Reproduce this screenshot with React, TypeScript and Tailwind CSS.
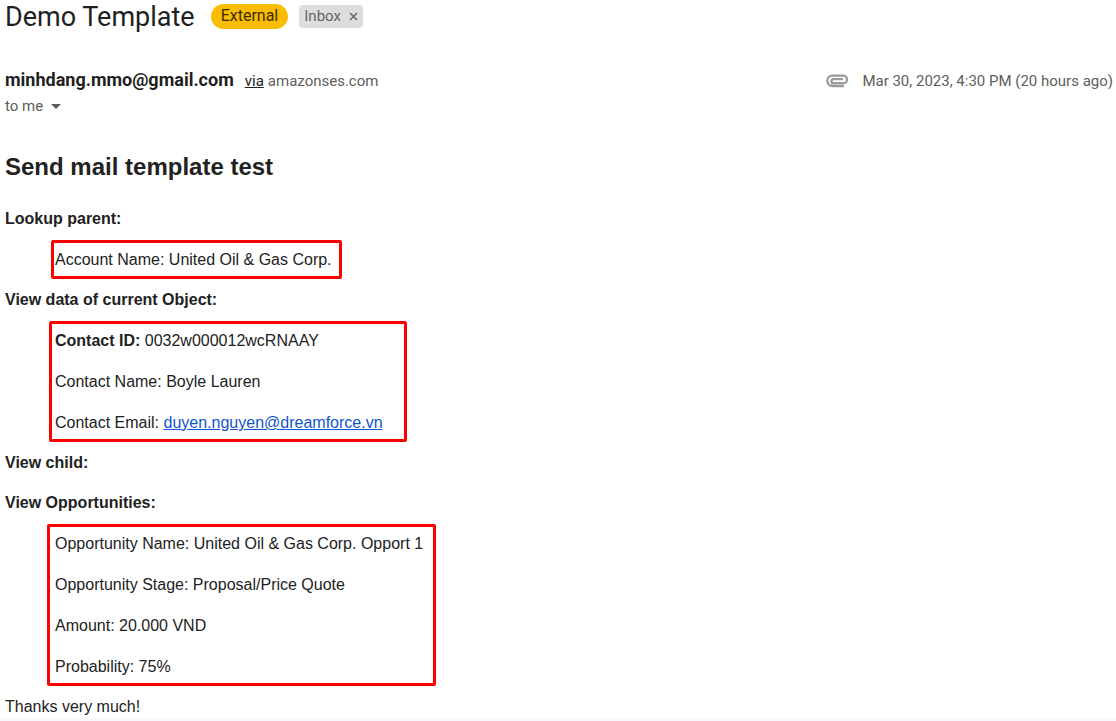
import type { ReactNode } from "react";
import { MdArrowDropDown } from "react-icons/md";

const contactEmail = "duyen.nguyen@dreamforce.vn";

const opportunityRows = [
    { label: "Opportunity Name", value: "United Oil & Gas Corp. Opport 1" },
    { label: "Opportunity Stage", value: "Proposal/Price Quote" },
    { label: "Amount", value: "20.000 VND" },
    { label: "Probability", value: "75%" },
];

const Highlight = ({ className, children }: { className: string; children: ReactNode }) => (
    <div className={`flex max-w-full flex-col gap-[19px] rounded-xs border-3 border-[#fe0000] pt-1.5 pb-[5px] ${className}`}>
        {children}
    </div>
);

const PaperclipIcon = () => (
    <svg viewBox="0 0 22 14" className="h-[14px] w-[22px]" fill="none" stroke="#999999" strokeWidth="2.3">
        <path d="M18 12H6.500a5.200 5.200 0 0 1 0-10.400h10.700a3.800 3.800 0 0 1 0 7.600H7.500a2 2 0 0 1 0-4H17" />
    </svg>
);

const MailHeader = () => (
    <header className="font-['Roboto','Liberation_Sans',sans-serif] text-[#5e5e5e]">
        <div className="flex h-8 items-center">
            <h1 className="pt-0.5 text-[27px] leading-8 text-[#1f1f1f]">Demo Template</h1>
            <span className="ml-4 flex h-[25px] items-center rounded-full bg-[#fbbc04] px-2.5 text-[16px] text-[#3c2d00]">
                External
            </span>
            <span className="ml-[11px] flex h-[23px] items-center gap-2 rounded bg-[#dddddd] px-[5px] text-[15px] text-[#666666]">
                Inbox
                <button type="button" aria-label="Remove label Inbox" className="cursor-pointer">
                    <svg viewBox="0 0 9 9" className="size-[9px]" fill="none" stroke="currentColor" strokeWidth="1.5">
                        <path d="M1 1l7 7M8 1l-7 7" />
                    </svg>
                </button>
            </span>
        </div>

        <div className="mt-9 flex items-center justify-between">
            <div className="flex items-baseline gap-1 text-[15px] leading-6">
                <span className="pr-[7px] text-[18px] font-bold text-[#1f1f1f]">minhdang.mmo@gmail.com</span>
                <a href="#via" className="text-[#222222] underline">via</a>
                <span>amazonses.com</span>
            </div>
            <div className="flex items-center gap-3.5 pr-[3px] text-[15px] leading-6">
                <PaperclipIcon />
                <time>Mar 30, 2023, 4:30 PM (20 hours ago)</time>
            </div>
        </div>

        <button type="button" className="mt-px flex cursor-pointer items-center gap-px text-[15px] leading-6">
            to me
            <MdArrowDropDown size={24} />
        </button>
    </header>
);

const App = () => {
    return (
        <main className="bg-white">
            <div className="pl-[5px]">
                <MailHeader />

                <article className="flex flex-col items-start gap-2.5 pt-[35px] font-['Liberation_Sans',Arial,sans-serif] text-[16px] leading-[22px] text-[#222222]">
                    <h2 className="mb-[17px] text-[24px] font-bold leading-7">Send mail template test</h2>

                    <h3 className="font-bold">Lookup parent:</h3>
                    <Highlight className="ml-[46px] w-[291px] pl-px">
                        <p>Account Name: United Oil &amp; Gas Corp.</p>
                    </Highlight>

                    <h3 className="font-bold">View data of current Object:</h3>
                    <Highlight className="ml-11 w-[358px] pl-[3px]">
                        <p><b>Contact ID:</b> 0032w000012wcRNAAY</p>
                        <p>Contact Name: Boyle Lauren</p>
                        <p>
                            Contact Email:{" "}
                            <a href={`mailto:${contactEmail}`} className="text-[#1155cc] underline">
                                {contactEmail}
                            </a>
                        </p>
                    </Highlight>

                    <h3 className="mb-2 font-bold">View child:</h3>
                    <h3 className="font-bold">View Opportunities:</h3>
                    <Highlight className="ml-[42px] w-[389px] pl-[5px]">
                        {opportunityRows.map((row) => (
                            <p key={row.label}>
                                {row.label}: {row.value}
                            </p>
                        ))}
                    </Highlight>

                    <p>Thanks very much!</p>
                </article>
            </div>
            <div className="h-[3px] bg-[#f6f8fc]" />
        </main>
    );
};

export default App;
